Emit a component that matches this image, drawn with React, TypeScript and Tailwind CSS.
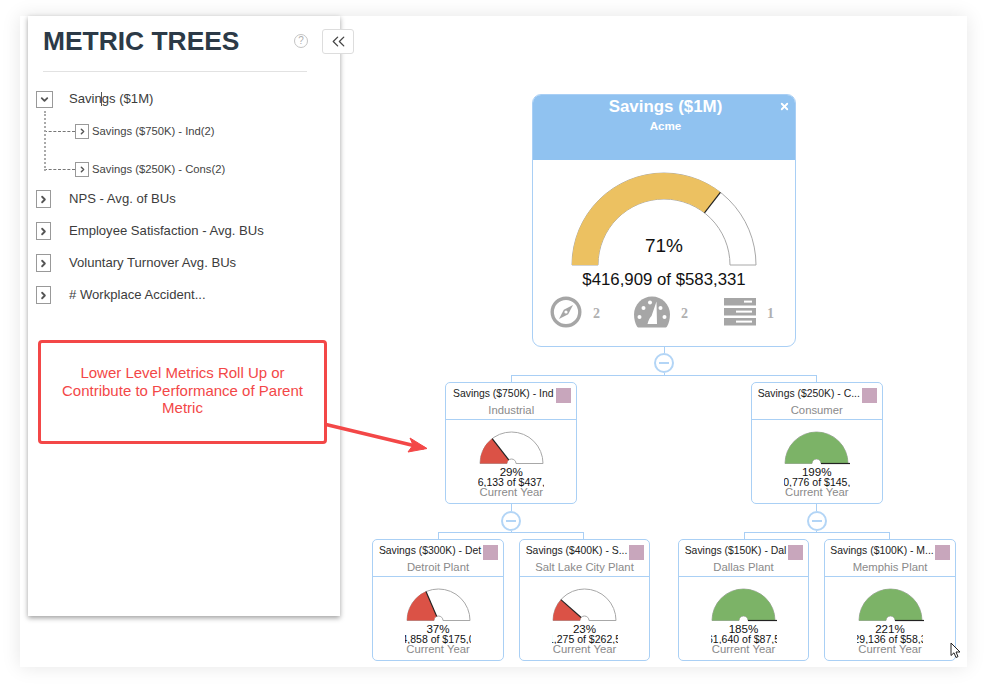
import React from "react";
import { ChevronRight, ChevronDown, ChevronsLeft, X } from "lucide-react";

function Gauge({ pct, color, R, r, over = 0 }: { pct: number; color: string; R: number; r: number; over?: number }) {
  const pad = 1;
  const ext = over;
  const W = 2 * R + 2 * pad + ext * 2;
  const H = R + 2 * pad;
  const cx = R + pad + ext;
  const cy = R + pad;
  const p = Math.min(pct, 100) / 100;
  const a = Math.PI * (1 - p);
  const ox = cx + R * Math.cos(a);
  const oy = cy - R * Math.sin(a);
  const ix = cx + r * Math.cos(a);
  const iy = cy - r * Math.sin(a);
  const full = `M${cx - R} ${cy}A${R} ${R} 0 0 1 ${cx + R} ${cy}L${cx + r} ${cy}A${r} ${r} 0 0 0 ${cx - r} ${cy}Z`;
  const val = `M${cx - R} ${cy}A${R} ${R} 0 0 1 ${ox} ${oy}L${ix} ${iy}A${r} ${r} 0 0 0 ${cx - r} ${cy}Z`;
  return (
    <svg width={W} height={H} className="block shrink-0">
      <path d={full} fill="#fff" stroke="#a8a8a8" strokeWidth="1" />
      <path d={val} fill={color} />
      <line x1={ix} y1={iy} x2={pct >= 100 ? ox + ext : ox} y2={oy} stroke="#222" strokeWidth="1.2" />
    </svg>
  );
}

function Minus({ line }: { line: number }) {
  return (
    <div className="flex flex-col items-center">
      <div className="w-px bg-[#a9cff5]" style={{ height: line }} />
      <div className="w-5 h-5 rounded-full border-2 border-[#b3d5f6] bg-white flex items-center justify-center">
        <div className="w-[10px] h-[2px] bg-[#b3d5f6]" />
      </div>
    </div>
  );
}

function Card({ title, sub, pct, color, value, w = 132 }: { title: string; sub: string; pct: number; color: string; value: string; w?: number }) {
  return (
    <div className="h-[122px] border border-[#aad0f5] rounded-[5px] bg-white flex flex-col shrink-0" style={{ width: w }}>
      <div className="h-[37px] border-b border-[#aad0f5] flex flex-col shrink-0">
        <div className="flex h-[21px] items-start pl-[5px] pr-[5px]">
          <div className="flex-1 min-w-0 flex justify-center whitespace-nowrap mt-[4px]">
            <span className="shrink-0 text-[10.4px] leading-[14px] text-[#222]">{title}</span>
          </div>
          <div className="w-[15px] h-[15px] bg-[#c8a6bc] shrink-0 ml-[1px] mt-[5px]" />
        </div>
        <div className="text-center text-[11.3px] leading-[13px] text-[#8a8a8a] whitespace-nowrap">{sub}</div>
      </div>
      <div className="flex flex-col items-center pt-[11px]">
        <Gauge pct={pct} color={color} R={31.5} r={4.5} over={pct >= 100 ? 2 : 0} />
        <div className="text-[11.6px] leading-[10px] text-[#111] mt-[2px] text-center">{pct}%</div>
        <div className="w-[66px] h-[10px] leading-[11px] text-[10.5px] text-[#111] overflow-hidden flex justify-center whitespace-nowrap">
          <span className="shrink-0">{value}</span>
        </div>
        <div className="text-[11.3px] leading-[11px] text-[#8a8a8a]">Current Year</div>
      </div>
    </div>
  );
}

function Branch({ children, width, line, tail }: { children: React.ReactNode; width: number; line: number; tail: number }) {
  return (
    <div className="flex flex-col items-center">
      <Minus line={line} />
      <div className="w-px bg-[#a9cff5]" style={{ height: tail }} />
      <div className="h-[7px] border-t border-l border-r border-[#a9cff5]" style={{ width }} />
      {children}
    </div>
  );
}

function Compass() {
  return (
    <svg width="32" height="32" viewBox="0 0 32 32">
      <circle cx="16" cy="16" r="13.8" fill="none" stroke="#a6a6a6" strokeWidth="3.4" />
      <path d="M23 9L18.2 18.2L9 23L13.8 13.8Z" fill="#a6a6a6" />
      <circle cx="16" cy="16" r="1.6" fill="#fff" />
    </svg>
  );
}

function Speedo() {
  return (
    <svg width="36" height="32" viewBox="0 0 36 32">
      <path d="M18 0.5C8 0.5 0 8.5 0 18.5C0 23 1.2 27.5 3 30.5C3.5 31.3 4 31.5 5 31.5H31C32 31.5 32.5 31.3 33 30.5C34.8 27.5 36 23 36 18.5C36 8.5 28 0.5 18 0.5Z" fill="#a6a6a6" />
      <circle cx="5.5" cy="21" r="2" fill="#fff" />
      <circle cx="9.5" cy="12" r="2" fill="#fff" />
      <circle cx="16" cy="6.5" r="2" fill="#fff" />
      <circle cx="26.5" cy="12" r="2" fill="#fff" />
      <circle cx="30.5" cy="21" r="2" fill="#fff" />
      <path d="M22.5 5.5L23 28H13.5C14.5 24 16 21.5 17.5 20Z" fill="#fff" />
    </svg>
  );
}

function Server() {
  return (
    <svg width="32" height="28" viewBox="0 0 32 28">
      {[0, 10, 20].map((y) => (
        <g key={y}>
          <rect x="0" y={y} width="32" height="7.5" fill="#a6a6a6" />
          <rect x={y === 0 ? 20 : 12} y={y + 2.6} width={y === 0 ? 8 : 16} height="2" fill="#fff" />
        </g>
      ))}
    </svg>
  );
}

function Stat({ icon, n, w }: { icon: React.ReactNode; n: string; w: string }) {
  return (
    <div className={`flex items-center ${w}`}>
      {icon}
      <span className="font-['Liberation_Serif',serif] text-[14px] font-bold text-[#b0b0b0] ml-[11px] mt-[2px]">{n}</span>
    </div>
  );
}

function Box({ open }: { open?: boolean }) {
  return (
    <div className={`border-[1.5px] border-[#999] flex items-center justify-center shrink-0 bg-white ${open ? "w-[17px] h-[17px]" : "w-[15px] h-[18px]"}`}>
      {open ? <ChevronDown size={11} strokeWidth={4} color="#555" /> : <ChevronRight size={11} strokeWidth={4} color="#555" />}
    </div>
  );
}

function Row({ label, open }: { label: string; open?: boolean }) {
  return (
    <div className="flex items-center h-[18px]">
      <Box open={open} />
      <span className={`text-[13.1px] leading-[18px] text-[#3c3c3c] ${open ? "ml-[16px]" : "ml-[18px]"}`}>{label}</span>
    </div>
  );
}

function SubRow({ label }: { label: string }) {
  return (
    <div className="flex items-center h-[15px] ml-[8px]">
      <div className="w-[31px] h-0 border-t border-dashed border-[#777]" />
      <div className="w-[14px] h-[15px] border border-[#999] flex items-center justify-center bg-white shrink-0">
        <ChevronRight size={9} strokeWidth={4} color="#555" />
      </div>
      <span className="text-[11.25px] leading-[15px] text-[#444] ml-[3px] whitespace-nowrap">{label}</span>
    </div>
  );
}

export default function App() {
  return (
    <div className="relative w-[988px] h-[692px] bg-white overflow-hidden pt-4 pl-5 font-['Liberation_Sans',Arial,sans-serif]">
      <div className="w-[947px] h-[651px] bg-white shadow-[0_0_18px_rgba(0,0,0,0.1)] flex">
        {/* Sidebar */}
        <div className="ml-2 w-[312px] h-[600px] bg-white shadow-[0_2px_5px_rgba(0,0,0,0.38)] shrink-0 flex flex-col">
          <div className="ml-[15px] h-[56px] border-b border-[#e2e2e2] w-[264px] flex items-start justify-between">
            <h1 className="text-[26.4px] leading-[32px] mt-[9px] font-bold text-[#2c3a47] whitespace-nowrap">METRIC TREES</h1>
            <div className="w-[14px] h-[14px] mt-[18px] -mr-px rounded-full border border-[#c4c4c4] text-[#b0b0b0] text-[10px] leading-[12px] text-center shrink-0">?</div>
          </div>
          <div className="pl-2 pt-[18px] flex flex-col">
            <Row label="Savings ($1M)" open />
            <div className="relative flex flex-col gap-[23px] pt-[16px] pb-[3px]">
              <div className="absolute left-[8px] top-[3px] h-[60px] border-l-2 border-dotted border-[#aaa]" />
              <SubRow label="Savings ($750K) - Ind(2)" />
              <SubRow label="Savings ($250K) - Cons(2)" />
            </div>
            <div className="flex flex-col gap-[14px] mt-[10px]">
              <Row label="NPS - Avg. of BUs" />
              <Row label="Employee Satisfaction - Avg. BUs" />
              <Row label="Voluntary Turnover Avg. BUs" />
              <Row label="# Workplace Accident..." />
            </div>
          </div>
        </div>

        {/* Tree */}
        <div className="ml-[32px] mt-[78px] flex flex-col items-center w-[584px] shrink-0">
          <div className="w-[264px] h-[253px] border border-[#a9cff5] rounded-[9px] bg-white overflow-hidden flex flex-col">
            <div className="relative h-[65px] bg-[#90c2f0] text-white text-center pl-[3px] shrink-0">
              <div className="text-[16.9px] leading-[20px] font-bold pt-[2px]">Savings ($1M)</div>
              <div className="text-[11.6px] leading-[14px] font-bold mt-[2px]">Acme</div>
              <X size={11} strokeWidth={4} color="#fff" className="absolute right-[5px] top-[6px]" />
            </div>
            <div className="flex flex-col items-center pt-[12px]">
              <div className="relative">
                <Gauge pct={71} color="#ecc161" R={92} r={66} />
                <div className="absolute inset-x-0 bottom-[8px] text-center text-[19px] leading-[24px] text-[#111]">71%</div>
              </div>
              <div className="text-[16.8px] leading-[20px] text-[#111] mt-[4px] whitespace-nowrap">$416,909 of $583,331</div>
            </div>
            <div className="flex items-center pl-[17px] mt-[6px] h-[32px]">
              <Stat w="w-[84px]" n="2" icon={<Compass />} />
              <Stat w="w-[90px]" n="2" icon={<Speedo />} />
              <Stat w="w-[50px]" n="1" icon={<Server />} />
            </div>
          </div>
          <Branch width={306} line={6} tail={2}>
            <div className="flex gap-[27.5px]">
              <div className="flex flex-col items-center w-[278px]">
                <Card title="Savings ($750K) - Ind" sub="Industrial" pct={29} color="#db5246" value="$126,133 of $437,500" />
                <Branch width={146} line={7} tail={1}>
                  <div className="flex gap-[15px]">
                    <Card w={131.5} title="Savings ($300K) - Det" sub="Detroit Plant" pct={37} color="#db5246" value="$64,858 of $175,000" />
                    <Card w={131.5} title="Savings ($400K) - S..." sub="Salt Lake City Plant" pct={23} color="#db5246" value="$61,275 of $262,500" />
                  </div>
                </Branch>
              </div>
              <div className="flex flex-col items-center w-[278px]">
                <Card title="Savings ($250K) - C..." sub="Consumer" pct={199} color="#7cb367" value="$290,776 of $145,833" />
                <Branch width={146} line={7} tail={1}>
                  <div className="flex gap-[15px]">
                    <Card w={131.5} title="Savings ($150K) - Dal" sub="Dallas Plant" pct={185} color="#7cb367" value="$161,640 of $87,500" />
                    <Card w={131.5} title="Savings ($100K) - M..." sub="Memphis Plant" pct={221} color="#7cb367" value="$129,136 of $58,333" />
                  </div>
                </Branch>
              </div>
            </div>
          </Branch>
        </div>
      </div>

      {/* Collapse button */}
      <div className="absolute left-[322px] top-[29px] w-[32px] h-[25px] bg-white border border-[#ddd] rounded-[3px] flex items-center justify-center">
        <ChevronsLeft size={21} strokeWidth={1.5} color="#444" />
      </div>

      {/* Text caret */}
      <div className="absolute left-[101px] top-[92px] w-px h-[14px] bg-[#555]" />

      {/* Callout */}
      <div className="absolute left-[38px] top-[340px] w-[289px] h-[104px] border-[3px] border-[#f34747] rounded-[4px] bg-white flex items-center justify-center text-center px-[16px] text-[15px] leading-[17.5px] text-[#f34747] pb-[3px]">
        Lower Level Metrics Roll Up or Contribute to Performance of Parent Metric
      </div>
      <svg className="absolute left-[320px] top-[415px]" width="115" height="45" viewBox="0 0 115 45">
        <path d="M6 9.5L104 33" stroke="#f34747" strokeWidth="3.4" fill="none" />
        <path d="M90 23L107 33.5L88 37L93 30Z" fill="#f34747" stroke="#f34747" strokeWidth="1" />
      </svg>

      {/* Mouse cursor */}
      <svg className="absolute left-[950px] top-[642px]" width="12" height="17" viewBox="0 0 12 17">
        <path d="M1 1V13.5L4 10.8L6 15.5L8 14.6L6 10H10Z" fill="#fff" stroke="#222" strokeWidth="1" />
      </svg>
    </div>
  );
}
